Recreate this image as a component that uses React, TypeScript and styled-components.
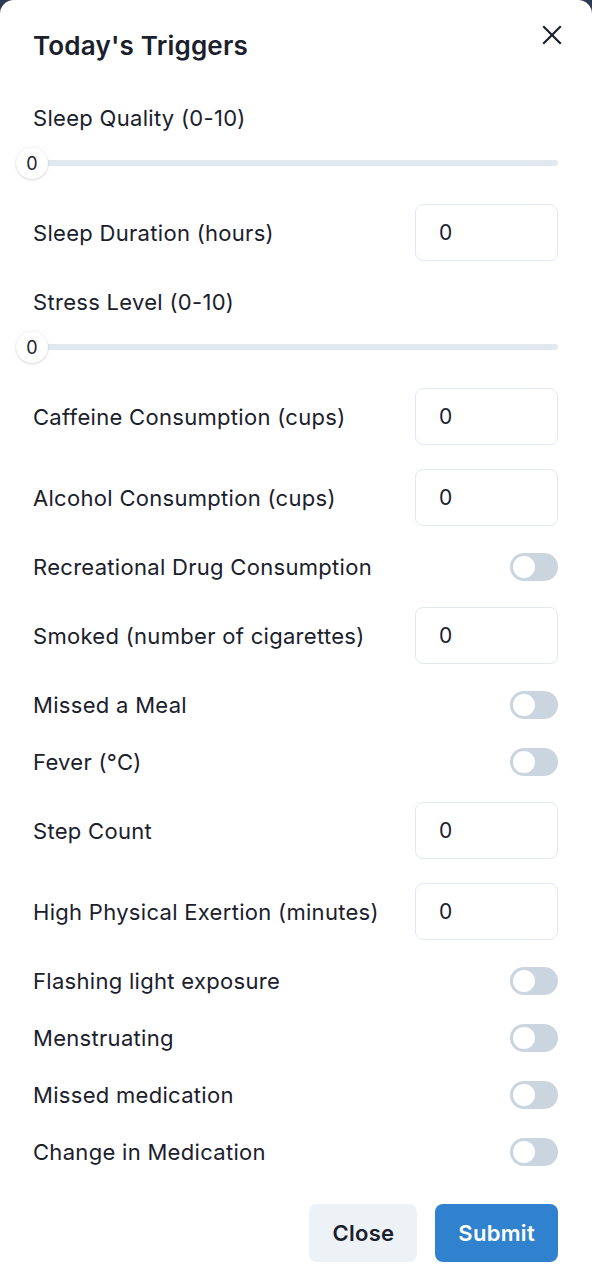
import React from "react";
import styled, { createGlobalStyle } from "styled-components";

const Global = createGlobalStyle`
  html, body { margin: 0; padding: 0; background: #2f3a52; }
  body { font-family: Inter, "Noto Sans", "Liberation Sans", sans-serif; color: #1a202c; }
  * { box-sizing: border-box; }
`;

const Modal = styled.div`
  background: #ffffff;
  border-radius: 14px 14px 0 0;
  width: 592px;
  min-height: 1280px;
  padding: 29px 34px 0 33px;
  position: relative;
`;

const Title = styled.h2`
  margin: 0 0 38px 0;
  font-size: 26px;
  line-height: 34px;
  font-weight: 600;
  letter-spacing: 0.2px;
`;

const CloseIcon = styled.button`
  position: absolute;
  top: 21px;
  right: 26px;
  width: 28px;
  height: 28px;
  border: none;
  background: transparent;
  padding: 0;
  display: flex;
  align-items: center;
  justify-content: center;
  color: #1a202c;
`;

const Form = styled.div`
  display: flex;
  flex-direction: column;
  gap: 24px;
`;

const Row = styled.div`
  display: flex;
  align-items: center;
  justify-content: space-between;
  min-height: 33px;
`;

const Label = styled.label`
  display: block;
  padding-top: 2px;
  font-size: 22px;
  line-height: 31px;
  font-weight: 400;
  letter-spacing: 0.3px;
  color: #1a202c;
`;

const SliderGroup = styled.div`
  display: flex;
  flex-direction: column;
`;

const SliderWrap = styled.div`
  position: relative;
  height: 34px;
  margin-top: 12px;
  display: flex;
  align-items: center;
`;

const Track = styled.div`
  width: 100%;
  height: 6px;
  border-radius: 3px;
  background: #e2e8f0;
`;

const Thumb = styled.div`
  position: absolute;
  left: -17px;
  top: 1px;
  width: 32px;
  height: 32px;
  border-radius: 50%;
  background: #ffffff;
  box-shadow: 0 1px 3px rgba(0, 0, 0, 0.14), 0 0 1px rgba(0, 0, 0, 0.12);
  display: flex;
  align-items: center;
  justify-content: center;
  font-size: 18px;
  color: #1a202c;
`;

const NumberInput = styled.div`
  width: 143px;
  height: 57px;
  border: 1.5px solid #e2e8f0;
  border-radius: 8px;
  padding-left: 23px;
  display: flex;
  align-items: center;
  font-size: 21px;
  color: #1a202c;
`;

const Switch = styled.div`
  width: 48px;
  height: 28px;
  border-radius: 14px;
  background: #cbd5e0;
  padding: 3px;
  display: flex;
  align-items: center;
`;

const Knob = styled.div`
  width: 22px;
  height: 22px;
  border-radius: 50%;
  background: #ffffff;
`;

const Footer = styled.div`
  display: flex;
  justify-content: flex-end;
  gap: 18px;
  margin-top: 36px;
`;

const Button = styled.button<{ $primary?: boolean }>`
  height: 58px;
  padding: 0 23px;
  border: none;
  border-radius: 8px;
  font-family: inherit;
  font-size: 22px;
  font-weight: 600;
  letter-spacing: 0.3px;
  background: ${(p) => (p.$primary ? "#3182ce" : "#edf2f7")};
  color: ${(p) => (p.$primary ? "#ffffff" : "#1a202c")};
`;

type Field =
  | { kind: "slider"; label: string }
  | { kind: "number"; label: string }
  | { kind: "switch"; label: string };

const fields: Field[] = [
  { kind: "slider", label: "Sleep Quality (0-10)" },
  { kind: "number", label: "Sleep Duration (hours)" },
  { kind: "slider", label: "Stress Level (0-10)" },
  { kind: "number", label: "Caffeine Consumption (cups)" },
  { kind: "number", label: "Alcohol Consumption (cups)" },
  { kind: "switch", label: "Recreational Drug Consumption" },
  { kind: "number", label: "Smoked (number of cigarettes)" },
  { kind: "switch", label: "Missed a Meal" },
  { kind: "switch", label: "Fever (°C)" },
  { kind: "number", label: "Step Count" },
  { kind: "number", label: "High Physical Exertion (minutes)" },
  { kind: "switch", label: "Flashing light exposure" },
  { kind: "switch", label: "Menstruating" },
  { kind: "switch", label: "Missed medication" },
  { kind: "switch", label: "Change in Medication" },
];

export default function App() {
  return (
    <>
      <Global />
      <Modal>
        <Title>Today's Triggers</Title>
        <CloseIcon aria-label="Close">
          <svg width="20" height="20" viewBox="0 0 20 20" fill="none">
            <path d="M2 2L18 18M18 2L2 18" stroke="currentColor" strokeWidth="2.2" strokeLinecap="square" />
          </svg>
        </CloseIcon>
        <Form>
          {fields.map((f) =>
            f.kind === "slider" ? (
              <SliderGroup key={f.label}>
                <Label>{f.label}</Label>
                <SliderWrap>
                  <Track />
                  <Thumb>0</Thumb>
                </SliderWrap>
              </SliderGroup>
            ) : f.kind === "number" ? (
              <Row key={f.label}>
                <Label>{f.label}</Label>
                <NumberInput>0</NumberInput>
              </Row>
            ) : (
              <Row key={f.label}>
                <Label>{f.label}</Label>
                <Switch>
                  <Knob />
                </Switch>
              </Row>
            )
          )}
        </Form>
        <Footer>
          <Button>Close</Button>
          <Button $primary>Submit</Button>
        </Footer>
      </Modal>
    </>
  );
}
